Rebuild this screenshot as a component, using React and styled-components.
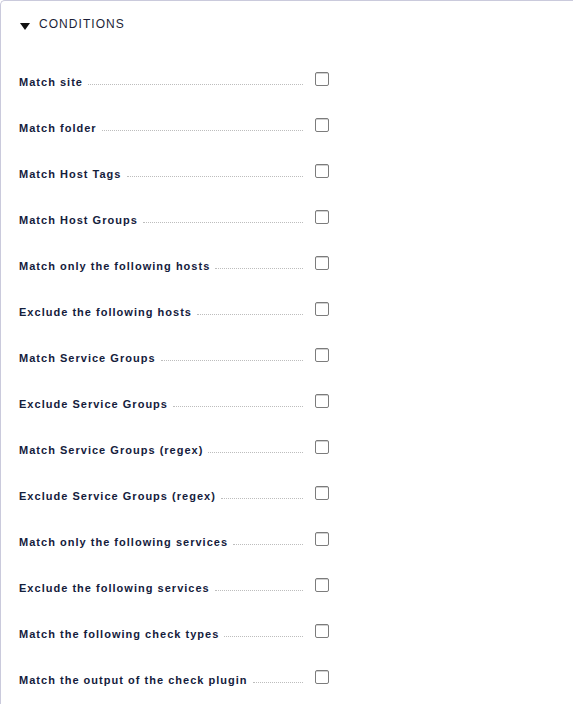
import React from "react";
import styled, { createGlobalStyle } from "styled-components";

const Global = createGlobalStyle`
  html, body { margin: 0; padding: 0; background: #ffffff; }
  body { font-family: "Liberation Sans", Arial, sans-serif; }
`;

const Panel = styled.section`
  box-sizing: border-box;
  width: 600px;
  min-height: 704px;
  border-top: 1px solid #cacadc;
  border-left: 1px solid #cacadc;
  border-top-left-radius: 5px;
  padding-top: 15px;
`;

const Header = styled.div`
  display: flex;
  align-items: center;
  height: 16px;
  padding-left: 19px;
  gap: 9px;
  font-size: 12px;
  line-height: 16px;
  letter-spacing: 1.05px;
  color: #1c1f38;
`;

const Triangle = styled.span`
  width: 0;
  height: 0;
  border-left: 5px solid transparent;
  border-right: 5px solid transparent;
  border-top: 7px solid #111;
  margin-top: 4px;
`;

const List = styled.div`
  margin-top: 40px;
  display: flex;
  flex-direction: column;
`;

const Row = styled.div`
  display: flex;
  align-items: baseline;
  height: 46px;
  padding-left: 18px;
  gap: 12px;
`;

const Label = styled.div`
  display: flex;
  align-items: baseline;
  width: 284px;
  font-size: 11px;
  line-height: 14px;
  font-weight: bold;
  letter-spacing: 1.02px;
  color: #14203c;
  white-space: nowrap;
`;

const Leader = styled.span`
  flex: 1;
  margin-left: 5px;
  border-bottom: 1px dotted #bdbdbd;
  transform: translateY(-1px);
`;

const Box = styled.span`
  box-sizing: border-box;
  width: 14px;
  height: 14px;
  border: 1px solid #7c7c7c;
  border-radius: 2px;
  box-shadow: inset 0 1px 0 #d0d0d0;
  background: #fff;
`;

const items = [
  "Match site",
  "Match folder",
  "Match Host Tags",
  "Match Host Groups",
  "Match only the following hosts",
  "Exclude the following hosts",
  "Match Service Groups",
  "Exclude Service Groups",
  "Match Service Groups (regex)",
  "Exclude Service Groups (regex)",
  "Match only the following services",
  "Exclude the following services",
  "Match the following check types",
  "Match the output of the check plugin",
];

export default function App() {
  return (
    <>
      <Global />
      <Panel>
        <Header>
          <Triangle />
          <span>CONDITIONS</span>
        </Header>
        <List>
          {items.map((t) => (
            <Row key={t}>
              <Label>
                <span>{t}</span>
                <Leader />
              </Label>
              <Box />
            </Row>
          ))}
        </List>
      </Panel>
    </>
  );
}
